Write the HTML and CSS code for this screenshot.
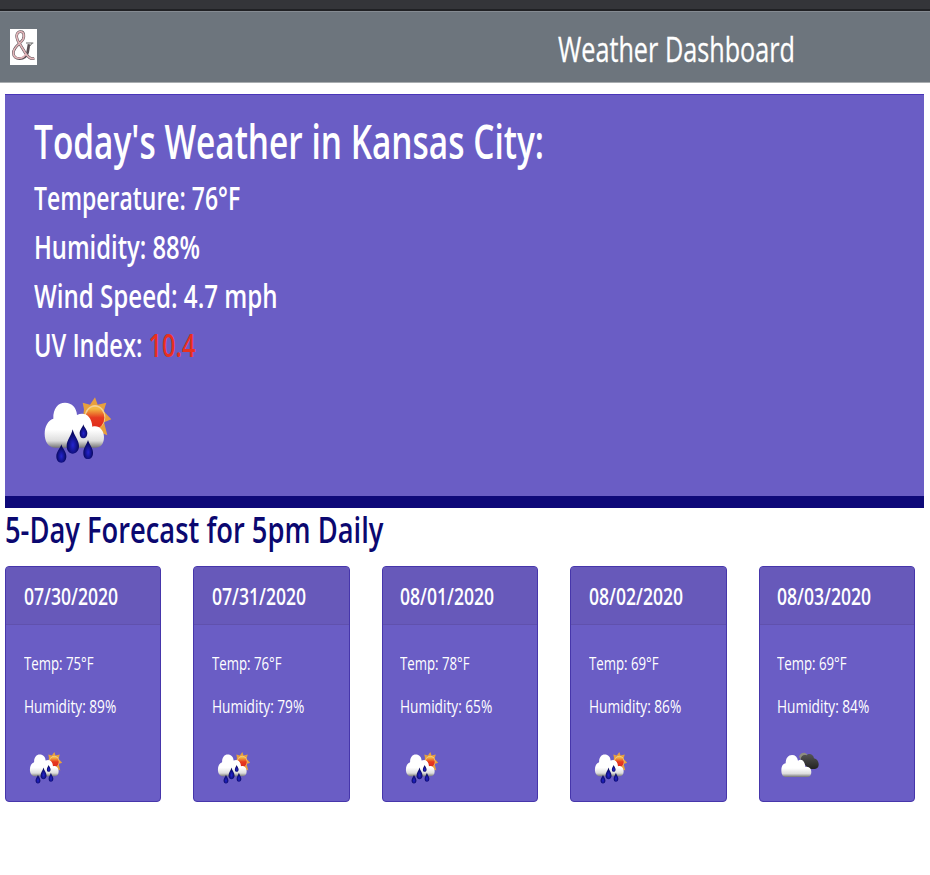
FILE: index.html
```html
<!DOCTYPE html>
<html lang="en">
<head>
<meta charset="utf-8">
<title>Weather Dashboard</title>
<link rel="stylesheet" href="styles.css">
</head>
<body>
<svg class="defs" width="0" height="0" aria-hidden="true">
  <defs>
    <linearGradient id="cloud" x1="0" y1="0" x2="0" y2="1"><stop offset="0.6" stop-color="#fff"/><stop offset="0.85" stop-color="#ddd"/><stop offset="1" stop-color="#777"/></linearGradient>
    <linearGradient id="sun" x1="0" y1="0" x2="0" y2="1"><stop offset="0.1" stop-color="#f3b840"/><stop offset="0.5" stop-color="#e63a20"/><stop offset="1" stop-color="#df2a1c"/></linearGradient>
    <radialGradient id="drop" cx="0.5" cy="0.65" r="0.5"><stop offset="0" stop-color="#2424d0"/><stop offset="1" stop-color="#08085e"/></radialGradient>
    <linearGradient id="dark" x1="0" y1="0" x2="0" y2="1"><stop offset="0" stop-color="#555"/><stop offset="1" stop-color="#222"/></linearGradient>
    <symbol id="rain" viewBox="12 0 288 270">
      <path fill="#e8a03c" d="M195 37l8 22 26-6-8 26 23 24-22 9 10 39-34-14-40-30 4-34-4-20 22 6z"/>
      <ellipse cx="195" cy="96" rx="31" ry="36" fill="#f4cf91"/>
      <ellipse cx="195" cy="98" rx="28" ry="33" fill="url(#sun)"/>
      <path fill="url(#cloud)" d="M76 188C54 188 44 168 44 146C44 124 54 106 70 101C69 70 84 53 105 53C126 53 140 69 141 90C164 80 184 92 187 125C206 119 222 135 222 156C222 177 212 188 195 188Z"/>
      <g fill="url(#drop)">
        <path d="M128 133C132 152 147 165 147 183C147 197 138 206 128 206C118 206 110 197 110 183C110 165 124 152 128 133Z"/>
        <path d="M160 118C162 128 172 134 172 145C172 154 167 160 160 160C153 160 149 154 149 145C149 134 158 128 160 118Z"/>
        <path d="M94 178C97 190 109 200 109 214C109 226 103 233 94 233C85 233 79 226 79 214C79 200 91 190 94 178Z"/>
        <path d="M174 165C177 178 189 188 189 203C189 215 183 222 174 222C165 222 160 215 160 203C160 188 171 178 174 165Z"/>
      </g>
    </symbol>
    <symbol id="cloudy" viewBox="112 560 144 131">
      <path fill="#8d8d80" d="M178 592Q182 579 195 580Q203 582 204 590L190 610Z"/>
      <path fill="url(#dark)" d="M183 602C183 590 192 584 201 588C207 580 222 584 223 597C233 599 238 608 237 618C236 626 231 629 224 629H207Z"/>
      <path fill="url(#cloud)" d="M137 653C128 653 125 643 125 633C125 621 130 613 138 612C138 596 146 587 157 587C167 587 173 593 175 604C186 597 196 606 197 623C208 620 215 627 215 638C215 647 211 653 204 653Z"/>
    </symbol>
  </defs>
</svg>
<div class="topbar"></div>
<header class="header">
  <svg class="logo" viewBox="0 0 81 108" preserveAspectRatio="none" role="img" aria-label="Logo">
    <rect width="81" height="108" fill="#fff"/>
    <path d="M73 88C62 92 55 86 46 72L23 34C14 12 28 7 33 8C42 9 44 20 39 31C31 45 10 53 10 72C10 93 45 97 53 70L57 46" fill="none" stroke="#5a5055" stroke-width="8"/>
    <path d="M73 88C62 92 55 86 46 72L23 34C14 12 28 7 33 8C42 9 44 20 39 31C31 45 10 53 10 72C10 90 38 95 48 74" fill="none" stroke="#e3b6ba" stroke-width="5"/>
    <path d="M48 42H70M67 42L57 54" fill="none" stroke="#666" stroke-width="3"/>
  </svg>
  <h1 class="brand"><span class="fit">Weather Dashboard</span></h1>
</header>
<main>
  <section class="today">
    <h2 class="city"><span class="fit">Today's Weather in Kansas City:</span></h2>
    <p class="stat temperature"><span class="fit">Temperature: 76°F</span></p>
    <p class="stat humidity"><span class="fit">Humidity: 88%</span></p>
    <p class="stat wind"><span class="fit">Wind Speed: 4.7 mph</span></p>
    <p class="stat uv-index"><span class="fit">UV Index: <span class="uv">10.4</span></span></p>
    <svg class="icon-large"><use href="#rain"/></svg>
  </section>
  <h2 class="forecast-title"><span class="fit">5-Day Forecast for 5pm Daily</span></h2>
  <section class="forecast">
    <article class="card"><h3 class="date"><span class="fit">07/30/2020</span></h3><div class="body"><p class="temp"><span class="fit">Temp: 75°F</span></p><p><span class="fit">Humidity: 89%</span></p><svg class="icon"><use href="#rain"/></svg></div></article>
    <article class="card"><h3 class="date"><span class="fit">07/31/2020</span></h3><div class="body"><p class="temp"><span class="fit">Temp: 76°F</span></p><p><span class="fit">Humidity: 79%</span></p><svg class="icon"><use href="#rain"/></svg></div></article>
    <article class="card"><h3 class="date"><span class="fit">08/01/2020</span></h3><div class="body"><p class="temp"><span class="fit">Temp: 78°F</span></p><p><span class="fit">Humidity: 65%</span></p><svg class="icon"><use href="#rain"/></svg></div></article>
    <article class="card"><h3 class="date"><span class="fit">08/02/2020</span></h3><div class="body"><p class="temp"><span class="fit">Temp: 69°F</span></p><p><span class="fit">Humidity: 86%</span></p><svg class="icon"><use href="#rain"/></svg></div></article>
    <article class="card"><h3 class="date"><span class="fit">08/03/2020</span></h3><div class="body"><p class="temp"><span class="fit">Temp: 69°F</span></p><p><span class="fit">Humidity: 84%</span></p><svg class="icon"><use href="#cloudy"/></svg></div></article>
  </section>
</main>
</body>
</html>
```
FILE: styles.css
```css
* { box-sizing: border-box; }
body { margin: 0; background: #fff; color: #fff; font-family: "Open Sans", "Noto Sans", sans-serif; overflow: hidden; }
h1, h2, h3, p { margin: 0; white-space: nowrap; }
svg { display: block; }
.defs { position: absolute; }

/* Condenses the text horizontally; each block sets its own factor. */
.fit { display: inline-block; transform: scaleX(var(--fit)); transform-origin: 0 50%; }

.topbar { height: 11px; background: #343539; border-bottom: 2px solid #202124; }
.header { display: flex; height: 72px; padding-left: 10px; background: #6d757d; border-top: 1px solid #858b92; border-bottom: 1px solid #a9adb0; }
.logo { width: 27px; height: 36px; margin-top: 17px; }
.brand { --fit: 0.71; width: 240px; margin-left: 521px; padding-top: 10px; font-size: 35.5px; font-weight: 400; line-height: 52px; -webkit-text-stroke: 0.3px #fff; }

main { padding: 11px 6px 0 5px; }
.today { height: 414px; padding: 18px 0 0 28.5px; background: #6a5dc5; border-top: 1px solid #4936b8; border-bottom: 12px solid #0e0979; }
.city { --fit: 0.711; font-size: 47px; font-weight: 600; line-height: 56px; margin-bottom: 4px; }
.stat { font-size: 32.5px; font-weight: 600; line-height: 49px; }
.temperature { --fit: 0.706; }
.humidity { --fit: 0.731; }
.wind { --fit: 0.741; }
.uv-index { --fit: 0.727; }
.uv { color: #e9301f; }
.icon-large { width: 96px; height: 90px; margin-top: 16px; }

.forecast-title { --fit: 0.759; height: 58px; padding: 1px 0 0; color: #0b0870; font-size: 36px; font-weight: 600; line-height: 41px; }
.forecast { display: grid; grid-template-columns: repeat(5, 156.4px); column-gap: 32px; }
.card { height: 236px; background: #6a5dc5; border: 1px solid #4636ab; border-radius: 4px; overflow: hidden; }
.date { --fit: 0.764; height: 58px; padding: 14px 0 0 17.5px; background: #6759ba; border-bottom: 1px solid #6051ad; font-size: 23px; font-weight: 600; line-height: 30px; }
.body { padding: 25px 0 0 17.5px; }
.body p { --fit: 0.76; margin-bottom: 15.5px; font-size: 18px; line-height: 27px; }
.body .temp { --fit: 0.735; }
.icon { width: 48px; height: 43.6px; margin-top: 26px; }
```
